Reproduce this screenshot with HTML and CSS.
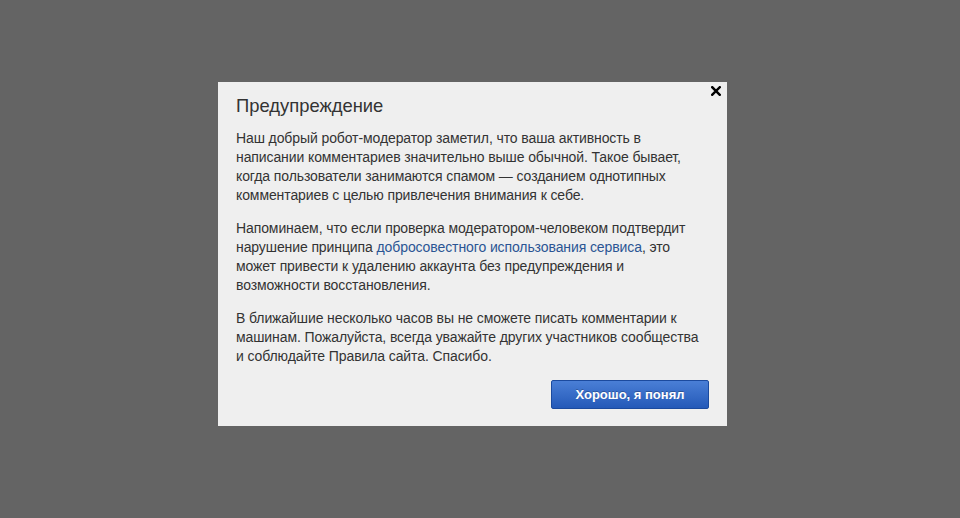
FILE: index.html
```html
<!DOCTYPE html>
<html lang="ru">
<head>
<meta charset="utf-8">
<title>Предупреждение</title>
<link rel="stylesheet" href="styles.css">
</head>
<body>
<div class="overlay">
  <div class="dialog">
    <span class="close"><svg width="10" height="10" viewBox="0 0 10 10"><path d="M1.2 1.2 L8.8 8.8 M8.8 1.2 L1.2 8.8" stroke="#000" stroke-width="2.4" stroke-linecap="square"/></svg></span>
    <h1 class="title">Предупреждение</h1>
    <p class="text">Наш добрый робот-модератор заметил, что ваша активность в написании комментариев значительно выше обычной. Такое бывает, когда пользователи занимаются спамом — созданием однотипных комментариев с целью привлечения внимания к себе.</p>
    <p class="text">Напоминаем, что если проверка модератором-человеком подтвердит нарушение принципа <a class="link" href="#">добросовестного использования сервиса</a>, это может привести к удалению аккаунта без предупреждения и возможности восстановления.</p>
    <p class="text">В ближайшие несколько часов вы не сможете писать комментарии к машинам. Пожалуйста, всегда уважайте других участников сообщества и соблюдайте Правила сайта. Спасибо.</p>
    <div class="actions">
      <button class="btn">Хорошо, я понял</button>
    </div>
  </div>
</div>
</body>
</html>
```
FILE: styles.css
```css
html, body {
  margin: 0;
  padding: 0;
  height: 100%;
  background: #646464;
}
.overlay {
  padding: 82px 0 0 218px;
}
.dialog {
  position: relative;
  box-sizing: border-box;
  width: 509px;
  height: 344px;
  background: #efefef;
  padding: 12px 18px 0 18px;
  font-family: "Liberation Sans", Arial, sans-serif;
  color: #333;
}
.close {
  position: absolute;
  right: 6px;
  top: 4px;
  width: 10px;
  height: 10px;
  display: block;
}
.close svg {
  display: block;
}
.title {
  margin: 0 0 11px 0;
  font-size: 18.4px;
  font-weight: normal;
  line-height: 24px;
  color: #333;
}
.text {
  margin: 0 0 14px 0;
  font-size: 14px;
  line-height: 19px;
  letter-spacing: -0.1px;
}
.link {
  color: #2b5594;
  text-decoration: none;
}
.actions {
  display: flex;
  justify-content: flex-end;
  margin-top: 12px;
}
.btn {
  width: 158px;
  height: 29px;
  border: 1px solid #1b4a9e;
  border-radius: 2px;
  background: linear-gradient(#4a7fd6, #2459b8);
  color: #fff;
  font-family: "Liberation Sans", Arial, sans-serif;
  font-size: 13px;
  font-weight: bold;
  padding: 0;
  text-shadow: 0 -1px 0 rgba(0,0,0,0.25);
}
```
